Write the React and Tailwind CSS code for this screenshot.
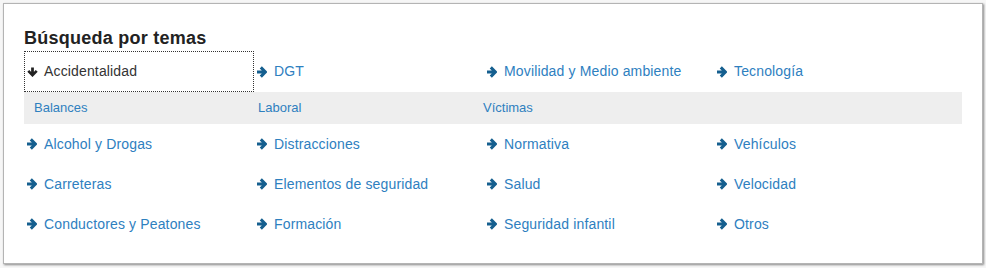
import React from 'react';

const rows = [
    ['Alcohol y Drogas', 'Distracciones', 'Normativa', 'Vehículos'],
    ['Carreteras', 'Elementos de seguridad', 'Salud', 'Velocidad'],
    ['Conductores y Peatones', 'Formación', 'Seguridad infantil', 'Otros'],
];

const ArrowRight = () => (
    <svg width="10" height="12" viewBox="0 0 10 12" className="shrink-0">
        <path d="M0 6H8.2M3.8 1.4L8.4 6L3.8 10.6" fill="none" stroke="#155f8f" strokeWidth="3" />
    </svg>
);

const ArrowDown = () => (
    <svg width="11" height="10" viewBox="0 0 12 10" className="shrink-0">
        <path d="M6 0V8M1.4 3.8L6 8.4L10.6 3.8" fill="none" stroke="#222" strokeWidth="3" />
    </svg>
);

const TopicLink = ({ label }) => (
    <a href="#" className="flex items-center gap-[7px] pl-[3px] text-[#2e80bf]">
        <ArrowRight />
        <span>{label}</span>
    </a>
);

const App = () => {
    return (
        <div className="bg-[#f6f6f6] p-[3px] w-[986px] h-[268px]" style={{ fontFamily: '"Liberation Sans", Arial, sans-serif' }}>
            <div className="bg-white border border-[#b4b4b4] shadow-[1px_1px_2px_rgba(0,0,0,0.45)] h-[261px] px-[20px] pt-[23px]">
                <h2 className="text-[18px] leading-[22px] font-bold tracking-[0.25px] text-[#222] mb-[2px]">Búsqueda por temas</h2>

                {/* first row */}
                <div className="grid grid-cols-[230px_230px_230px_230px] h-[41px] text-[14px] tracking-[0.15px]">
                    <div className="flex items-center gap-[6px] pl-[2px] border border-dotted border-[#333] text-[#333]">
                        <ArrowDown />
                        <span>Accidentalidad</span>
                    </div>
                    <div className="flex items-center"><TopicLink label="DGT" /></div>
                    <div className="flex items-center"><TopicLink label="Movilidad y Medio ambiente" /></div>
                    <div className="flex items-center"><TopicLink label="Tecnología" /></div>
                </div>

                {/* sub topics */}
                <div className="flex items-center h-[32px] bg-[#eeeeee] text-[13px] text-[#2e80bf]">
                    <div className="w-[234px] pl-[10px]">Balances</div>
                    <div className="w-[225px]">Laboral</div>
                    <div>Víctimas</div>
                </div>

                <div>
                    {rows.map((row, i) => (
                        <div key={i} className="grid grid-cols-[230px_230px_230px_230px] h-10 text-[14px] tracking-[0.15px]">
                            {row.map((label) => (
                                <div key={label} className="flex items-center"><TopicLink label={label} /></div>
                            ))}
                        </div>
                    ))}
                </div>
            </div>
        </div>
    );
};

export default App;
